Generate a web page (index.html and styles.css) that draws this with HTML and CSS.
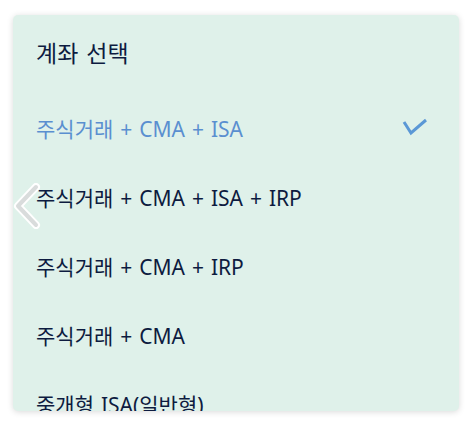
FILE: index.html
```html
<!DOCTYPE html>
<html lang="ko">
<head>
    <title>계좌 선택</title>
    <link rel="stylesheet" href="styles.css">
</head>
<body>
    <div class="sheet">
        <!-- Title -->
        <div class="sheet-head">
            <h1>계좌 선택</h1>
        </div>

        <!-- Account list -->
        <ul class="accounts">
            <li class="account selected">
                <span>주식거래 + CMA + ISA</span>
                <svg class="check" width="26" height="20" viewBox="0 0 26 20">
                    <polyline points="2,4 9,15 24,2" fill="none" stroke="#5b98d6" stroke-width="3"/>
                </svg>
            </li>
            <li class="account"><span>주식거래 + CMA + ISA + IRP</span></li>
            <li class="account"><span>주식거래 + CMA + IRP</span></li>
            <li class="account"><span>주식거래 + CMA</span></li>
            <li class="account"><span>중개형 ISA(일반형)</span></li>
        </ul>
    </div>

    <!-- back arrow overlay -->
    <svg class="back" width="30" height="46" viewBox="0 0 30 46">
        <polyline points="24,4 6,23 24,42" fill="none" stroke="#ffffff" stroke-width="8" stroke-linecap="round" stroke-linejoin="round"/>
        <polyline points="24,4 6,23 24,42" fill="none" stroke="#d9dcdc" stroke-width="4" stroke-linecap="round" stroke-linejoin="round"/>
    </svg>
</body>
</html>
```

FILE: styles.css
```css
body {
    margin: 0;
    padding: 15px 14px 16px 13px;
    background-color: #ffffff;
    font-family: "Noto Sans", "Noto Sans CJK KR", sans-serif;
    color: #0d1b40;
}

/* Bottom sheet card */
.sheet {
    height: 396px;
    background-color: #dff1ea;
    border-radius: 5px;
    box-shadow: 0 1px 6px rgba(0, 0, 0, 0.15);
    overflow: hidden;
}

.sheet-head {
    height: 74px;
    display: flex;
    align-items: center;
    padding: 0 23px 4px;
}

h1 {
    margin: 0;
    font-size: 23px;
    font-weight: 400;
    word-spacing: 2px;
}

.accounts {
    list-style: none;
    margin: 0;
    padding: 0;
}

.account {
    height: 69px;
    display: flex;
    align-items: center;
    justify-content: space-between;
    padding: 0 31px 0 23px;
    font-size: 21px;
    font-weight: 400;
    word-spacing: 1.5px;
}

.account.selected {
    color: #5a8fd0;
}

/* Back arrow that floats over the sheet */
.back {
    position: absolute;
    left: 12px;
    top: 183px;
}
```
